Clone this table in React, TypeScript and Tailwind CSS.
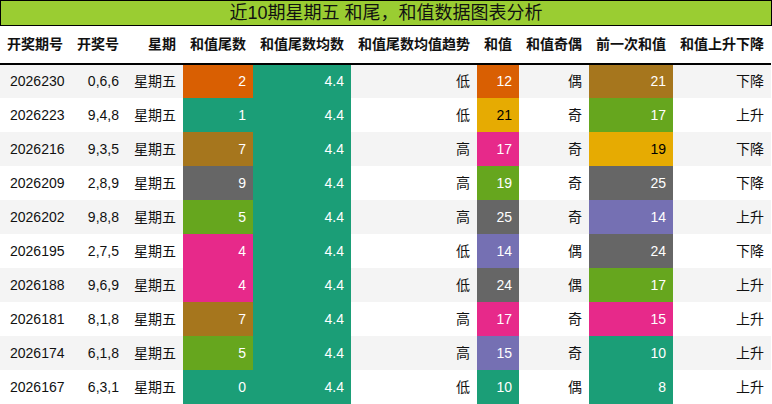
import React from "react";

type Row = {
  id: string;
  nums: string;
  tail: number;
  tailColor: string;
  trend: string;
  sum: number;
  sumColor: string;
  oe: string;
  prev: number;
  prevColor: string;
  ud: string;
};

const C = {
  orange: "bg-[#d95f02] text-white",
  teal: "bg-[#1b9e77] text-white",
  brown: "bg-[#a6761d] text-white",
  gray: "bg-[#666666] text-white",
  green: "bg-[#66a61e] text-white",
  pink: "bg-[#e7298a] text-white",
  purple: "bg-[#7570b3] text-white",
  yellow: "bg-[#e6ab02] text-black",
};

const rows: Row[] = [
  { id: "2026230", nums: "0,6,6", tail: 2, tailColor: C.orange, trend: "低", sum: 12, sumColor: C.orange, oe: "偶", prev: 21, prevColor: C.brown, ud: "下降" },
  { id: "2026223", nums: "9,4,8", tail: 1, tailColor: C.teal, trend: "低", sum: 21, sumColor: C.yellow, oe: "奇", prev: 17, prevColor: C.green, ud: "上升" },
  { id: "2026216", nums: "9,3,5", tail: 7, tailColor: C.brown, trend: "高", sum: 17, sumColor: C.pink, oe: "奇", prev: 19, prevColor: C.yellow, ud: "下降" },
  { id: "2026209", nums: "2,8,9", tail: 9, tailColor: C.gray, trend: "高", sum: 19, sumColor: C.green, oe: "奇", prev: 25, prevColor: C.gray, ud: "下降" },
  { id: "2026202", nums: "9,8,8", tail: 5, tailColor: C.green, trend: "高", sum: 25, sumColor: C.gray, oe: "奇", prev: 14, prevColor: C.purple, ud: "上升" },
  { id: "2026195", nums: "2,7,5", tail: 4, tailColor: C.pink, trend: "低", sum: 14, sumColor: C.purple, oe: "偶", prev: 24, prevColor: C.gray, ud: "下降" },
  { id: "2026188", nums: "9,6,9", tail: 4, tailColor: C.pink, trend: "低", sum: 24, sumColor: C.gray, oe: "偶", prev: 17, prevColor: C.green, ud: "上升" },
  { id: "2026181", nums: "8,1,8", tail: 7, tailColor: C.brown, trend: "高", sum: 17, sumColor: C.pink, oe: "奇", prev: 15, prevColor: C.pink, ud: "上升" },
  { id: "2026174", nums: "6,1,8", tail: 5, tailColor: C.green, trend: "高", sum: 15, sumColor: C.purple, oe: "奇", prev: 10, prevColor: C.teal, ud: "上升" },
  { id: "2026167", nums: "6,3,1", tail: 0, tailColor: C.teal, trend: "低", sum: 10, sumColor: C.teal, oe: "偶", prev: 8, prevColor: C.teal, ud: "上升" },
];

const headers = [
  { t: "开奖期号", w: "w-[70px]" },
  { t: "开奖号", w: "w-[56px]" },
  { t: "星期", w: "w-[57px]" },
  { t: "和值尾数", w: "w-[70px]" },
  { t: "和值尾数均数", w: "w-[98px]" },
  { t: "和值尾数均值趋势", w: "w-[126px]" },
  { t: "和值", w: "w-[42px]" },
  { t: "和值奇偶", w: "w-[70px]" },
  { t: "前一次和值", w: "w-[84px]" },
  { t: "和值上升下降", w: "w-[98px]" },
];

export default function App() {
  return (
    <div
      className="w-[772px] h-[404px] bg-white text-[#111] overflow-hidden"
      style={{ fontFamily: '"Liberation Sans", "Noto Sans CJK SC", sans-serif' }}
    >
      <div className="h-[26px] bg-[#9acd32] border border-black flex items-center justify-center text-[18px] leading-none text-[#111]">
        近10期星期五 和尾，和值数据图表分析
      </div>
      <table className="w-[771px] border-collapse table-fixed text-[14px]">
        <thead>
          <tr className="h-[38px] border-b-2 border-black">
            {headers.map((h, i) => (
              <th
                key={i}
                className={`${h.w} px-[7px] text-right font-bold whitespace-nowrap`}
              >
                {h.t}
              </th>
            ))}
          </tr>
        </thead>
        <tbody>
          {rows.map((r, i) => (
            <tr
              key={r.id}
              className={`h-[34px] ${i % 2 === 0 ? "bg-[#f4f4f4]" : "bg-white"}`}
            >
              <td className="px-[7px] text-left pl-[10px] whitespace-nowrap">{r.id}</td>
              <td className="px-[7px] text-right whitespace-nowrap">{r.nums}</td>
              <td className="px-[7px] text-right whitespace-nowrap">星期五</td>
              <td className={`px-[7px] text-right ${r.tailColor}`}>{r.tail}</td>
              <td className="px-[7px] text-right bg-[#1b9e77] text-white">4.4</td>
              <td className="px-[7px] text-right">{r.trend}</td>
              <td className={`px-[7px] text-right ${r.sumColor}`}>{r.sum}</td>
              <td className="px-[7px] text-right">{r.oe}</td>
              <td className={`px-[7px] text-right ${r.prevColor}`}>{r.prev}</td>
              <td className="px-[7px] text-right whitespace-nowrap">{r.ud}</td>
            </tr>
          ))}
        </tbody>
      </table>
    </div>
  );
}
